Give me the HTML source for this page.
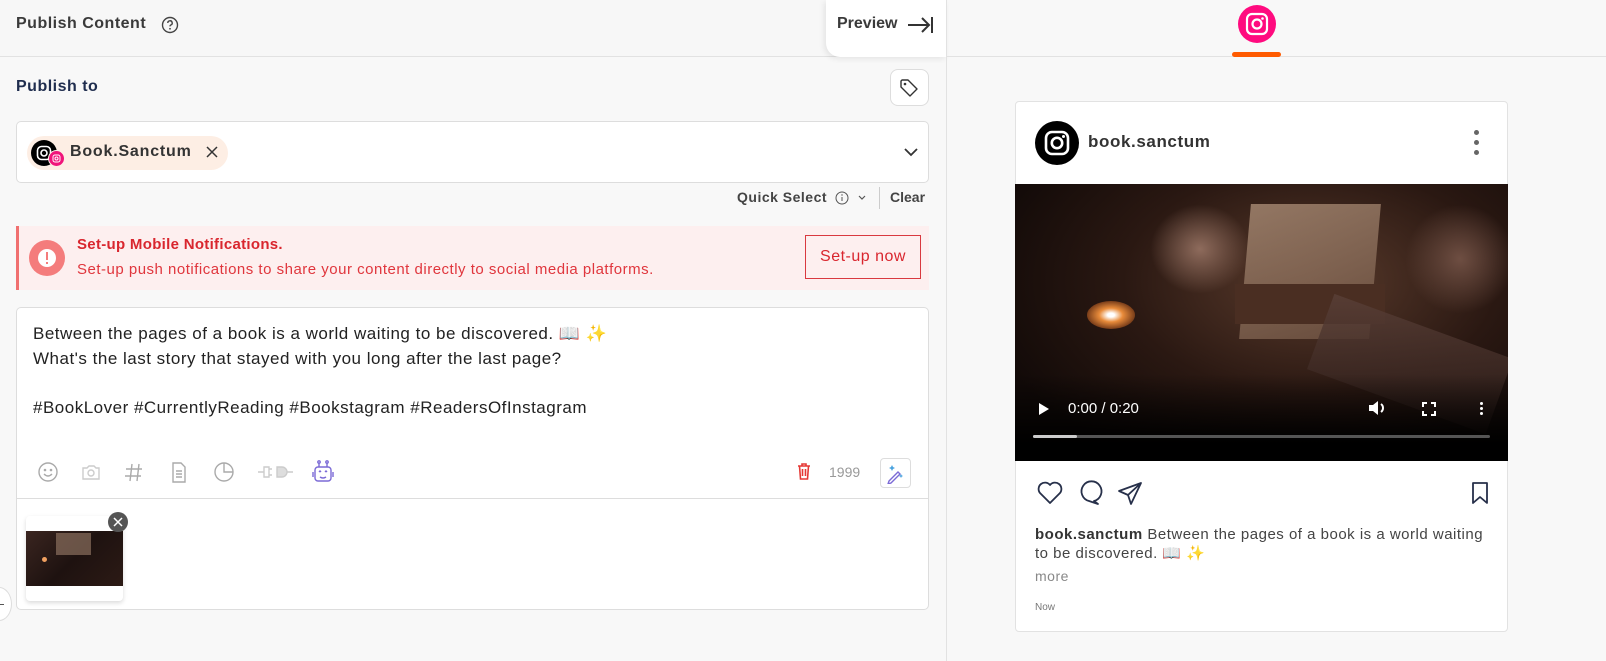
<!DOCTYPE html>
<html><head><meta charset="utf-8">
<style>
*{box-sizing:border-box;margin:0;padding:0}
body{width:1606px;height:661px;background:#f8f8f8;font-family:"Liberation Sans","Noto Sans CJK SC",sans-serif;color:#333;position:relative;overflow:hidden}
.abs{position:absolute}
.txt{white-space:nowrap}
</style></head><body>
<div class="abs" style="left:0;top:0;width:946px;height:57px;background:#f7f7f7;border-bottom:1px solid #e2e2e2"></div>
<div class="abs txt" style="left:16px;top:15px;font-size:16px;font-weight:bold;color:#3a3a3a;letter-spacing:.5px">Publish Content</div>
<svg class="abs" style="left:161px;top:16px" width="18" height="18" viewBox="0 0 18 18"><circle cx="9" cy="9" r="7.5" fill="none" stroke="#444" stroke-width="1.4"/><path d="M6.8 7a2.2 2.2 0 1 1 3 2c-.6.3-.8.7-.8 1.4" fill="none" stroke="#444" stroke-width="1.4"/><circle cx="9" cy="12.8" r=".9" fill="#444"/></svg>
<div class="abs" style="left:826px;top:0;width:121px;height:57px;background:#fff;border-radius:0 0 0 14px;box-shadow:-2px 2px 6px rgba(0,0,0,.08)"></div>
<div class="abs txt" style="left:837px;top:15px;font-size:16px;font-weight:bold;color:#3a3a3a">Preview</div>
<svg class="abs" style="left:906px;top:14px" width="28" height="22" viewBox="0 0 28 22"><path d="M2 11h21M16 4l7 7-7 7M26 3v16" fill="none" stroke="#333" stroke-width="2"/></svg>
<div class="abs" style="left:946px;top:0;width:1px;height:661px;background:#e2e2e2"></div>

<div class="abs txt" style="left:16px;top:78px;font-size:16px;font-weight:bold;color:#1f2d4e;letter-spacing:.5px">Publish to</div>
<div class="abs" style="left:890px;top:69px;width:39px;height:37px;background:#fff;border:1px solid #ddd;border-radius:8px"></div>
<svg class="abs" style="left:899px;top:78px" width="20" height="20" viewBox="0 0 20 20"><path d="M2 3v6l9 9 7-7-9-9H3z" fill="none" stroke="#333" stroke-width="1.4" stroke-linejoin="round"/><circle cx="6" cy="6" r="1.3" fill="#333"/></svg>
<div class="abs" style="left:16px;top:121px;width:913px;height:62px;background:#fff;border:1px solid #ddd;border-radius:5px"></div>
<div class="abs" style="left:27px;top:136px;width:201px;height:34px;background:#fdeee4;border-radius:17px"></div>
<div class="abs" style="left:31px;top:140px;width:26px;height:26px;border-radius:50%;background:#000"></div>
<svg class="abs" style="left:36px;top:145px" width="16" height="16" viewBox="0 0 16 16"><rect x="1.5" y="1.5" width="13" height="13" rx="4" fill="none" stroke="#fff" stroke-width="1.6"/><circle cx="8" cy="8" r="3" fill="none" stroke="#fff" stroke-width="1.6"/></svg>
<div class="abs" style="left:48px;top:150px;width:17px;height:17px;border-radius:50%;background:#f0157a;border:1px solid #fdeee4"></div>
<svg class="abs" style="left:52px;top:154px" width="9" height="9" viewBox="0 0 9 9"><rect x="1" y="1" width="7" height="7" rx="2" fill="none" stroke="#fff" stroke-width="1"/><circle cx="4.5" cy="4.5" r="1.5" fill="none" stroke="#fff"/></svg>
<div class="abs txt" style="left:70px;top:143px;font-size:16px;font-weight:bold;color:#333;letter-spacing:.8px">Book.Sanctum</div>
<svg class="abs" style="left:206px;top:146px" width="12" height="12" viewBox="0 0 12 12"><path d="M1 1l10 10M11 1L1 11" stroke="#333" stroke-width="1.5"/></svg>
<svg class="abs" style="left:903px;top:146px" width="16" height="12" viewBox="0 0 16 12"><path d="M2 3l6 6 6-6" fill="none" stroke="#333" stroke-width="1.8"/></svg>

<div class="abs txt" style="left:737px;top:189px;font-size:14px;font-weight:bold;color:#444;letter-spacing:.5px">Quick Select</div>
<svg class="abs" style="left:835px;top:191px" width="14" height="14" viewBox="0 0 14 14"><circle cx="7" cy="7" r="6" fill="none" stroke="#555" stroke-width="1"/><path d="M7 6v4" stroke="#555"/><circle cx="7" cy="4" r=".7" fill="#555"/></svg>
<svg class="abs" style="left:857px;top:194px" width="10" height="8" viewBox="0 0 10 8"><path d="M2 2l3 3 3-3" fill="none" stroke="#555" stroke-width="1.2"/></svg>
<div class="abs" style="left:879px;top:187px;width:1px;height:22px;background:#ccc"></div>
<div class="abs txt" style="left:890px;top:189px;font-size:14px;font-weight:bold;color:#444">Clear</div>

<div class="abs" style="left:16px;top:226px;width:913px;height:64px;background:#fdefef;border-left:3px solid #f07070"></div>
<div class="abs" style="left:29px;top:240px;width:36px;height:36px;border-radius:50%;background:#f47c7c"></div>
<div class="abs" style="left:38px;top:249px;width:18px;height:18px;border-radius:50%;background:#fff"></div>
<div class="abs" style="left:46px;top:252px;width:2px;height:8px;background:#f47c7c"></div>
<div class="abs" style="left:46px;top:262px;width:2px;height:2px;background:#f47c7c"></div>
<div class="abs txt" style="left:77px;top:236px;font-size:15px;font-weight:bold;color:#d9262e;letter-spacing:.3px">Set-up Mobile Notifications.</div>
<div class="abs txt" style="left:77px;top:261px;font-size:15px;color:#e0363d;letter-spacing:.5px">Set-up push notifications to share your content directly to social media platforms.</div>
<div class="abs txt" style="left:805px;top:235px;width:116px;height:44px;border:1px solid #d9393f;color:#d9262e;font-size:16px;line-height:42px;text-align:center;letter-spacing:.5px">Set-up now</div>

<div class="abs" style="left:16px;top:307px;width:913px;height:303px;background:#fff;border:1px solid #ddd;border-radius:5px"></div>
<div class="abs" style="left:17px;top:498px;width:911px;height:1px;background:#ddd"></div>
<div class="abs" style="left:33px;top:322px;font-size:17px;line-height:24.5px;color:#222;white-space:pre;letter-spacing:.5px">Between the pages of a book is a world waiting to be discovered. 📖 ✨
What's the last story that stayed with you long after the last page?

#BookLover #CurrentlyReading #Bookstagram #ReadersOfInstagram</div>
<svg class="abs" style="left:36px;top:460px" width="310" height="24" viewBox="0 0 310 24">
<g fill="none" stroke="#aaa" stroke-width="1.4">
<circle cx="12" cy="12" r="9"/><circle cx="9" cy="10" r=".6" fill="#aaa"/><circle cx="15" cy="10" r=".6" fill="#aaa"/><path d="M8 14q4 4 8 0"/>
<path d="M47 8h4l2-2h5l2 2h3v11H47z" stroke="#ccc"/><circle cx="55" cy="13" r="3" stroke="#ccc"/>
<path d="M96 4l-2 17M103 4l-2 17M90 9h16M89 16h16"/>
<path d="M137 3h8l4 4v15h-12z M140 11h6M140 14h6M140 17h6"/>
<circle cx="188" cy="12" r="9"/><path d="M188 3v9h9"/>
<path d="M222 12h6M228 7h5v10h-5zM233 9h3M233 15h3" stroke="#ccc"/><path d="M241 7h5a5 5 0 0 1 0 10h-5zM251 12h6" stroke="#ccc" fill="#ddd"/>
</g>
<g fill="none" stroke="#7b6ad6" stroke-width="1.4"><rect x="279" y="7" width="16" height="14" rx="3"/><path d="M283 7V3M291 7V3M277 12v5M297 12v5M284 17q3 2 6 0"/><circle cx="283" cy="2" r="1.2"/><circle cx="291" cy="2" r="1.2"/><path d="M283 12l1-1 1 1M289 12l1-1 1 1"/></g>
</svg>
<svg class="abs" style="left:796px;top:462px" width="16" height="18" viewBox="0 0 16 18"><path d="M2 4h12M6 4V2h4v2M3.5 4l1 13h7l1-13M6.5 7v7M9.5 7v7" fill="none" stroke="#e53935" stroke-width="1.6"/></svg>
<div class="abs txt" style="left:829px;top:464px;font-size:14px;color:#999">1999</div>
<div class="abs" style="left:880px;top:458px;width:31px;height:30px;background:#fff;border:1px solid #ddd;border-radius:4px"></div>
<svg class="abs" style="left:884px;top:462px" width="22" height="22" viewBox="0 0 22 22"><path d="M5 19l9-9 2 2-9 9-3 1z" fill="none" stroke="#7b6ad6" stroke-width="1.4"/><path d="M8 3l1 2 2 1-2 1-1 2-1-2-2-1 2-1zM17 12l.7 1.4 1.4.6-1.4.6-.7 1.4-.7-1.4-1.4-.6 1.4-.6z" fill="#4aa3df"/></svg>
<div class="abs" style="left:26px;top:516px;width:97px;height:85px;background:#fff;border-radius:4px;box-shadow:0 2px 5px rgba(0,0,0,.15)"></div>
<div class="abs" style="left:26px;top:531px;width:97px;height:55px;background:linear-gradient(135deg,#3a2520,#1e1210 50%,#2c1a15);overflow:hidden"><div style="position:absolute;left:30px;top:2px;width:35px;height:22px;background:#8a6f5e;opacity:.7"></div><div style="position:absolute;left:16px;top:26px;width:5px;height:5px;background:#f0a060;border-radius:50%"></div></div>
<div class="abs" style="left:108px;top:512px;width:20px;height:20px;border-radius:50%;background:#555"></div>
<svg class="abs" style="left:113px;top:517px" width="10" height="10" viewBox="0 0 10 10"><path d="M1 1l8 8M9 1L1 9" stroke="#fff" stroke-width="1.5"/></svg>
<div class="abs" style="left:-14px;top:587px;width:26px;height:34px;border-radius:50%;background:#fff;border:1px solid #ddd"></div>
<div class="abs" style="left:0;top:604px;width:4px;height:1px;background:#555"></div>

<div class="abs" style="left:947px;top:56px;width:659px;height:1px;background:#e2e2e2"></div>
<div class="abs" style="left:1238px;top:5px;width:38px;height:38px;border-radius:50%;background:#ff0b7f"></div>
<svg class="abs" style="left:1245px;top:12px" width="24" height="24" viewBox="0 0 24 24"><rect x="2" y="2" width="20" height="20" rx="5" fill="none" stroke="#fff" stroke-width="2.2"/><circle cx="12" cy="12" r="4.5" fill="none" stroke="#fff" stroke-width="2.2"/><circle cx="17.5" cy="6.5" r="1.3" fill="#fff"/></svg>
<div class="abs" style="left:1232px;top:52px;width:49px;height:5px;background:#ff5b00;border-radius:3px"></div>

<div class="abs" style="left:1015px;top:101px;width:493px;height:531px;background:#fff;border:1px solid #e2e2e2;border-radius:4px"></div>
<div class="abs" style="left:1035px;top:121px;width:44px;height:44px;border-radius:50%;background:#000"></div>
<svg class="abs" style="left:1043px;top:129px" width="28" height="28" viewBox="0 0 28 28"><rect x="3" y="3" width="22" height="22" rx="6" fill="none" stroke="#fff" stroke-width="2.6"/><circle cx="14" cy="14" r="5.2" fill="none" stroke="#fff" stroke-width="2.6"/><circle cx="20.5" cy="7.5" r="1.5" fill="#fff"/></svg>
<div class="abs txt" style="left:1088px;top:132px;font-size:17px;font-weight:bold;color:#333;letter-spacing:.6px">book.sanctum</div>
<div class="abs" style="left:1474px;top:130px;width:5px;height:5px;border-radius:50%;background:#666"></div>
<div class="abs" style="left:1474px;top:140px;width:5px;height:5px;border-radius:50%;background:#666"></div>
<div class="abs" style="left:1474px;top:150px;width:5px;height:5px;border-radius:50%;background:#666"></div>

<div class="abs" style="left:1015px;top:184px;width:493px;height:277px;background:radial-gradient(ellipse at 60% 35%,#5a3b2c 0%,#2a1812 45%,#120a08 80%);overflow:hidden">
 <div style="position:absolute;left:230px;top:20px;width:130px;height:135px;background:linear-gradient(160deg,#9d806b,#6b4f3f);transform:skewX(-5deg);opacity:.9"></div>
 <div style="position:absolute;left:220px;top:100px;width:150px;height:40px;background:#4a2e22"></div>
 <div style="position:absolute;left:135px;top:20px;width:100px;height:90px;background:radial-gradient(ellipse,#8e6b5c,rgba(80,50,40,0) 70%)"></div>
 <div style="position:absolute;left:390px;top:20px;width:110px;height:110px;background:radial-gradient(ellipse,#6e4e42,rgba(60,40,30,0) 70%)"></div>
 <div style="position:absolute;left:72px;top:117px;width:48px;height:28px;border-radius:50%;background:radial-gradient(ellipse,#fff 10%,#e88b3a 35%,#7a3e1a 70%)"></div>
 <div style="position:absolute;left:300px;top:140px;width:190px;height:80px;background:linear-gradient(160deg,#5a4038,#2a1a16);transform:rotate(20deg);opacity:.8"></div>
 <div style="position:absolute;left:0;top:190px;width:493px;height:87px;background:linear-gradient(to bottom,rgba(0,0,0,0),#000 80%)"></div>
</div>
<svg class="abs" style="left:1037px;top:401px" width="14" height="16" viewBox="0 0 14 16"><path d="M2 2l10 6-10 6z" fill="#fff"/></svg>
<div class="abs txt" style="left:1068px;top:400px;font-size:15px;color:#fff">0:00 / 0:20</div>
<svg class="abs" style="left:1367px;top:399px" width="20" height="18" viewBox="0 0 20 18"><path d="M2 6h4l5-4v14l-5-4H2z" fill="#fff"/><path d="M14 5a5 5 0 0 1 0 8" fill="none" stroke="#fff" stroke-width="2"/></svg>
<svg class="abs" style="left:1421px;top:401px" width="16" height="16" viewBox="0 0 16 16"><path d="M2 6V2h4M10 2h4v4M14 10v4h-4M6 14H2v-4" fill="none" stroke="#fff" stroke-width="2"/></svg>
<div class="abs" style="left:1480px;top:402px;width:3px;height:3px;background:#fff;border-radius:50%"></div>
<div class="abs" style="left:1480px;top:407px;width:3px;height:3px;background:#fff;border-radius:50%"></div>
<div class="abs" style="left:1480px;top:412px;width:3px;height:3px;background:#fff;border-radius:50%"></div>
<div class="abs" style="left:1033px;top:435px;width:457px;height:3px;background:#555;border-radius:2px"></div>
<div class="abs" style="left:1033px;top:435px;width:44px;height:3px;background:#ccc;border-radius:2px"></div>

<svg class="abs" style="left:1037px;top:479px" width="120" height="28" viewBox="0 0 120 28"><g fill="none" stroke="#27304a" stroke-width="1.8" stroke-linejoin="round"><path d="M13 24L3 14a6 6 0 0 1 10-8 6 6 0 0 1 10 8z"/><path d="M52 22a10 10 0 1 1 5 0l4 3z"/><path d="M104 4L82 12l9 4 3 9zM91 16l13-12"/></g></svg>
<svg class="abs" style="left:1470px;top:481px" width="20" height="24" viewBox="0 0 20 24"><path d="M3 2h14v20l-7-6-7 6z" fill="none" stroke="#27304a" stroke-width="1.8" stroke-linejoin="round"/></svg>
<div class="abs" style="left:1035px;top:526px;width:460px;font-size:15px;line-height:18.5px;color:#444;letter-spacing:.5px"><b style="color:#333">book.sanctum</b> Between the pages of a book is a world waiting to be discovered. 📖 ✨</div>
<div class="abs txt" style="left:1035px;top:568px;font-size:14px;color:#888;letter-spacing:.5px">more</div>
<div class="abs txt" style="left:1035px;top:602px;font-size:10px;color:#777">Now</div>
</body></html>
